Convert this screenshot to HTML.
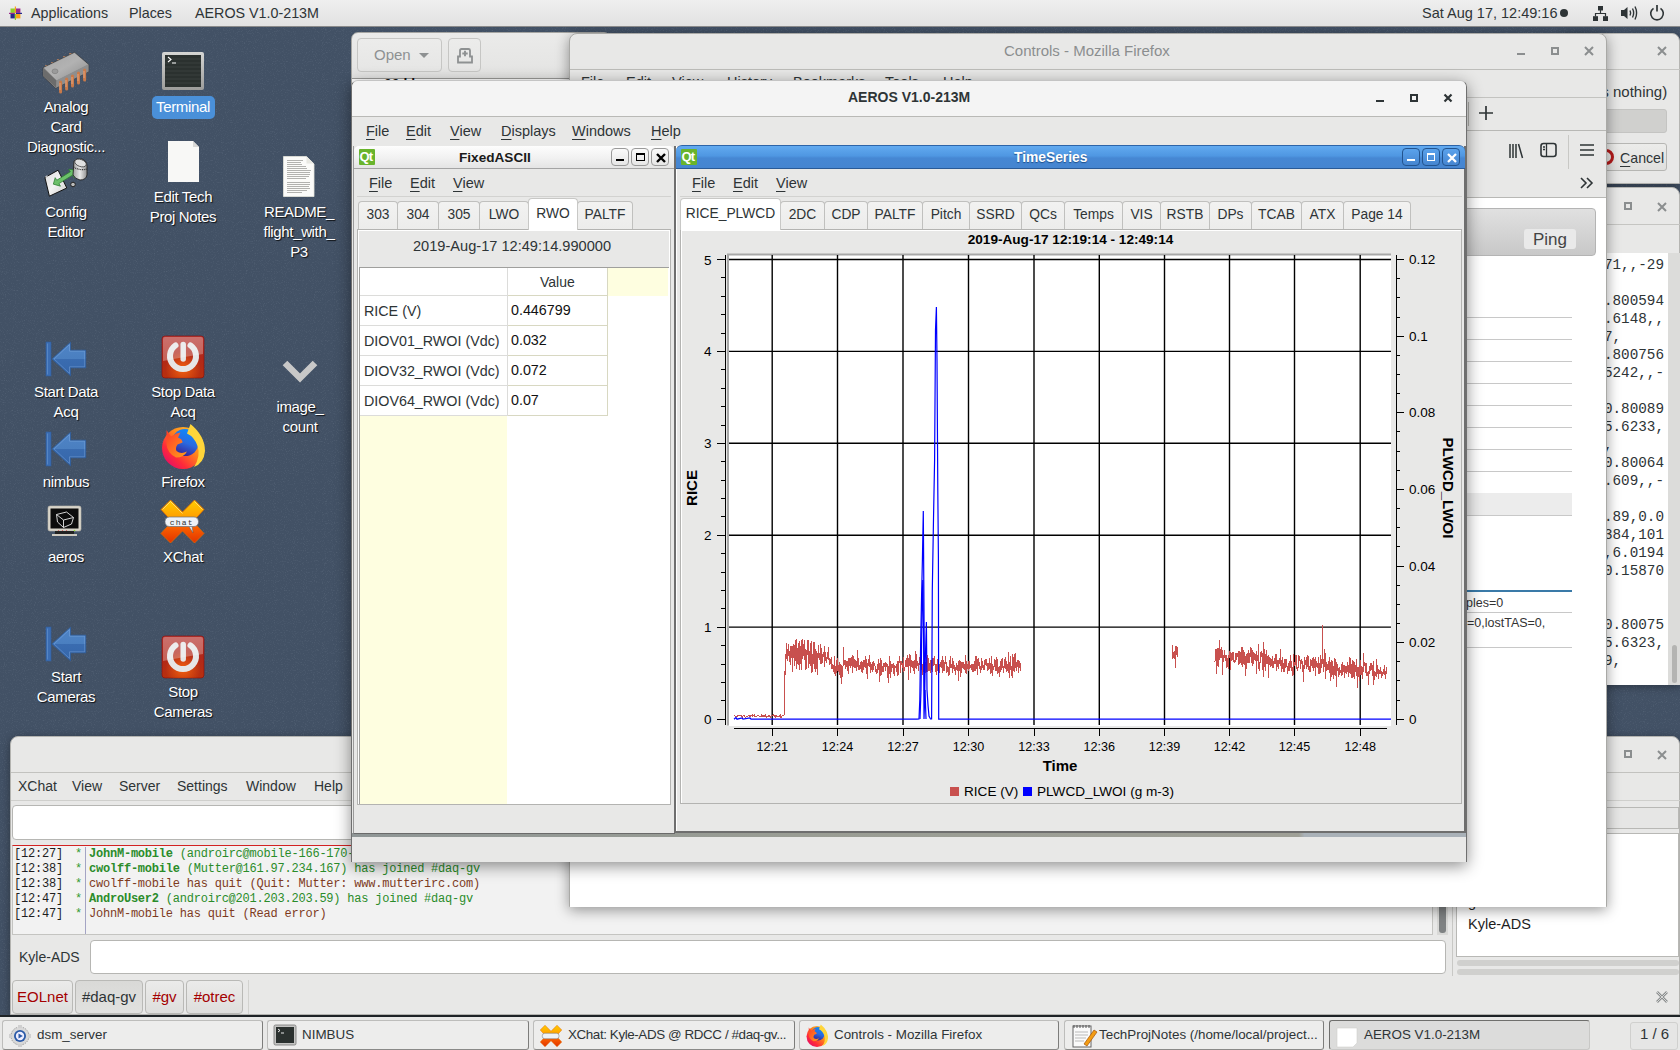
<!DOCTYPE html>
<html><head><meta charset="utf-8">
<style>
*{box-sizing:border-box;margin:0;padding:0}
html,body{width:1680px;height:1050px;overflow:hidden}
body{position:relative;background:#425165;font-family:"Liberation Sans",sans-serif;font-size:14px;color:#2e3436}
.a{position:absolute}
.t{position:absolute;white-space:nowrap;line-height:1}
.mono{font-family:"Liberation Mono",monospace}
.u{text-decoration:underline;text-underline-offset:3px}
/* top bar */
#top{left:0;top:0;width:1680px;height:27px;background:linear-gradient(#efefef,#e2e2e2);border-bottom:1px solid #8a8a8a}
/* desktop icon labels */
.dl{position:absolute;color:#fff;font-size:15px;letter-spacing:-0.35px;text-align:center;line-height:20px;text-shadow:1px 1px 1px rgba(0,0,0,.8);width:110px}
/* taskbar */
#tb{left:0;top:1015px;width:1680px;height:35px;background:#e8e8e7;border-top:2px solid #1e2326}
.tbb{position:absolute;top:3px;height:30px;overflow:hidden;background:#ededec;border:1px solid #bdbdbb;border-right-color:#7d7d7b;border-bottom-color:#8a8a88;border-radius:3px}
.tbb.act{background:#dcdcdb;border-color:#6f6f6d;border-right-color:#c8c8c6;border-bottom-color:#c8c8c6}
.tbb span{position:absolute;top:6px;font-size:13.4px;color:#2e3436;white-space:nowrap}
.win{position:absolute;background:#e8e8e7;border:1px solid #a9a9a7;border-radius:7px 7px 0 0;box-shadow:0 2px 12px rgba(0,0,0,.35)}
.qt{width:16px;height:16px;background:#69b42c;border-radius:1px}
.qt::after{content:"Qt";position:absolute;left:0.5px;top:1px;color:#fff;font-weight:bold;font-size:13px;line-height:14px;letter-spacing:-0.8px}
.qb{position:absolute;width:18px;height:18px;border:1px solid #9a9a9a;border-radius:4px;background:linear-gradient(#fafafa,#e6e6e6)}
.qb.bl{border-color:#23548f;background:linear-gradient(#5aa2ec,#4585d0)}
.tab{position:absolute;top:201px;height:29px;padding-bottom:4px;background:linear-gradient(#f2f2f1,#ececeb);border:1px solid #c0c0be;border-bottom:0;border-radius:4px 4px 0 0;font-size:13.8px;color:#2e3436;text-align:center;line-height:25px;white-space:nowrap}
.tab.sel{top:198px;height:32px;background:#fff;line-height:29px;border-color:#c8c8c6}
.xt{position:absolute;top:980px;height:34px;border:1px solid #b9b9b6;border-radius:4px;background:linear-gradient(#ebebea,#dededc);font-size:15px;color:#2e3436;text-align:center;line-height:32px;white-space:nowrap}
</style></head><body>

<svg class="a" style="left:0;top:27px" width="1680" height="990"><filter id="nz" x="0" y="0" width="100%" height="100%"><feTurbulence type="fractalNoise" baseFrequency="0.9" numOctaves="2" seed="3"/><feColorMatrix type="matrix" values="0 0 0 0 0.55  0 0 0 0 0.62  0 0 0 0 0.72  0 0 0 1.6 -0.85"/></filter><rect width="1680" height="990" filter="url(#nz)" opacity="0.2"/></svg>
<!-- ===== DESKTOP ICONS ===== -->
<div id="icons">
<svg class="a" style="left:0;top:0" width="340" height="730">
<defs>
<linearGradient id="gdoc" x1="0" y1="0" x2="1" y2="1"><stop offset="0" stop-color="#d8d8d8"/><stop offset="0.5" stop-color="#f4f4f4"/><stop offset="1" stop-color="#c8c8c8"/></linearGradient>
<linearGradient id="gpis" x1="0" y1="0" x2="1" y2="0"><stop offset="0" stop-color="#a0a0a0"/><stop offset="0.5" stop-color="#e8e8e8"/><stop offset="1" stop-color="#909090"/></linearGradient>
<linearGradient id="gchip2" x1="0" y1="0" x2="1" y2="1"><stop offset="0" stop-color="#a6a6a6"/><stop offset="0.5" stop-color="#b2b2b2"/><stop offset="1" stop-color="#8c8c8c"/></linearGradient>
<radialGradient id="gglow" cx="0.5" cy="0.78" r="0.42"><stop offset="0" stop-color="#ff6a10" stop-opacity="0.85"/><stop offset="1" stop-color="#ff6a10" stop-opacity="0"/></radialGradient>
<linearGradient id="gred" x1="0" y1="0" x2="0" y2="1"><stop offset="0" stop-color="#b83a36"/><stop offset="0.5" stop-color="#b0281a"/><stop offset="1" stop-color="#b8300e"/></linearGradient>
<linearGradient id="gblue" x1="0" y1="0" x2="0" y2="1"><stop offset="0" stop-color="#4f84c6"/><stop offset="0.5" stop-color="#4a7fc0"/><stop offset="0.5" stop-color="#3a6cb0"/><stop offset="1" stop-color="#3566aa"/></linearGradient>
<linearGradient id="gxt" x1="0" y1="0" x2="0" y2="1"><stop offset="0" stop-color="#ffcc00"/><stop offset="0.45" stop-color="#ff9a00"/><stop offset="0.55" stop-color="#ff6a00"/><stop offset="1" stop-color="#e23200"/></linearGradient>
<radialGradient id="gff" cx="0.45" cy="0.6" r="0.6"><stop offset="0" stop-color="#ffbd2e"/><stop offset="0.6" stop-color="#ff6a1e"/><stop offset="1" stop-color="#e8244a"/></radialGradient>
<linearGradient id="gffo" x1="0" y1="1" x2="1" y2="0"><stop offset="0" stop-color="#d4007f"/><stop offset="0.3" stop-color="#ff2a3a"/><stop offset="0.6" stop-color="#ff8a1a"/><stop offset="1" stop-color="#ffd83a"/></linearGradient>
<linearGradient id="gffb" x1="0.7" y1="0" x2="0.3" y2="1"><stop offset="0" stop-color="#0a8cff"/><stop offset="0.5" stop-color="#2a6ae0"/><stop offset="1" stop-color="#3a1a8a"/></linearGradient>
<linearGradient id="gffh" x1="0" y1="0" x2="1" y2="1"><stop offset="0" stop-color="#ff3a2a"/><stop offset="1" stop-color="#ffa01a"/></linearGradient>
<linearGradient id="gterm" x1="0" y1="0" x2="0" y2="1"><stop offset="0" stop-color="#d6d6d4"/><stop offset="1" stop-color="#9c9c9a"/></linearGradient>
</defs>
<!-- chip -->
<g>
<g fill="#c88a62"><ellipse cx="46.5" cy="66" rx="1.6" ry="1"/><ellipse cx="52.5" cy="63" rx="1.6" ry="1"/><ellipse cx="58.5" cy="60" rx="1.6" ry="1"/><ellipse cx="64.5" cy="57" rx="1.6" ry="1"/><ellipse cx="70.5" cy="54" rx="1.6" ry="1"/></g>
<path d="M43 67.6L74.5 52.3L88.7 64.4V71.7L55.4 88.2L43 76.3Z" fill="#8a8a8a" stroke="#333" stroke-width="0.6"/>
<path d="M44 67.8L74.5 53L88 64.6L56.5 80.5Z" fill="url(#gchip2)"/>
<path d="M43.2 68L56.5 80.5V88L43.2 76Z" fill="#6c6c6c"/>
<path d="M56.5 80.5L88.5 64.6V71.5L56 87.8Z" fill="#8e8e8e"/>
<ellipse cx="55" cy="71.3" rx="3" ry="2.4" fill="#9a9a9a" stroke="#7a7a7a" stroke-width="0.6"/>
<g stroke="#c97a4a" stroke-width="3" stroke-linecap="round"><path d="M60.6 82V92M66.6 79V89M72.5 76V86M78.5 73V83M84.6 70V80"/></g>
<g stroke="#e8b090" stroke-width="0.8"><path d="M60 83V90M66 80V87M72 77V84M78 74V81M84 71V78"/></g>
</g>
<!-- terminal -->
<rect x="162" y="52" width="42" height="38" rx="2" fill="url(#gterm)"/>
<rect x="165" y="55" width="36" height="32" fill="#2b312f"/>
<g stroke="#3a413e" stroke-width="1"><path d="M165 59H201M165 63H201M165 67H201M165 71H201M165 75H201M165 79H201M165 83H201"/></g>
<path d="M168 57L171 59.5L168 62M172 63H176" stroke="#fff" stroke-width="1.1" fill="none"/>
<rect x="152" y="96" width="63" height="23" rx="5" fill="#4a90d9"/>
<!-- config editor -->
<path d="M44.9 177.5L58.1 170.2L66.8 188L49.4 196.2Z" fill="url(#gdoc)" stroke="#111" stroke-width="1"/>
<path d="M44.9 177.5Q46 174.5 48.5 176Z" fill="#ddd"/>
<g transform="rotate(-32 66 178)">
<path d="M52 176.5L57 172V175H73V172L79 177L73 182V179H57V182Z" fill="#6cc06a" stroke="#2e7d32" stroke-width="0.7"/>
</g>
<path d="M74 161Q76 158 82 159Q87 161 87 166V175Q86 180 80 180Q75 179 73 175Z" fill="url(#gpis)" stroke="#222" stroke-width="0.9"/>
<ellipse cx="80.5" cy="163" rx="6" ry="3.5" transform="rotate(20 80.5 163)" fill="#e0e0e0" stroke="#333" stroke-width="0.7"/>
<path d="M73.5 167Q80 171 87 169" fill="none" stroke="#333" stroke-width="1.2" stroke-dasharray="1 0.8"/>
<circle cx="73" cy="184.5" r="2.3" fill="#bbb" stroke="#222" stroke-width="1"/>
<!-- edit tech doc -->
<path d="M168 141H193L199 147V182H168Z" fill="#f8f8f6"/>
<path d="M193 141V147H199" fill="#d8d8d6"/>
<!-- readme -->
<path d="M283.5 156.5H306.5L314 164V196.5H283.5Z" fill="#fbfbf9" stroke="#e4e4dc" stroke-width="0.8"/>
<path d="M306.5 156.5V163.5H314Z" fill="#e8e8e2"/>
<g stroke="#a9a9a6" stroke-width="0.9"><path d="M287 160.5H303M287 162.5H301M287 164.5H302M287 166.5H306M287 168.5H307M287 170.5H311M287 172.5H310M287 174.5H310M287 176.5H309M287 178.5H306M287 182.5H310M287 184.5H310M287 186.5H309M287 188.5H310M287 190.5H307M287 192.5H302"/></g>
<!-- start data acq arrow -->
<g id="arr">
<rect x="46" y="342" width="5" height="34" fill="#3b6db3" stroke="#2f5e9e" stroke-width="0.6"/>
<path d="M52 359L70.5 342.2V350.2H85.7V367.8H70.5V375.8Z" fill="url(#gblue)" stroke="#2f5e9e" stroke-width="0.8"/>
<path d="M54 359L69.5 344.6V351.2H84.7V366.8H69.5V373.4Z" fill="none" stroke="#8ab4e8" stroke-width="0.7" opacity="0.55"/><path d="M47.5 343.5V374.5" stroke="#8ab4e8" stroke-width="0.7" opacity="0.5"/>
</g>
<use href="#arr" y="90"/>
<use href="#arr" y="285"/>
<!-- stop power -->
<g id="pwr">
<rect x="162" y="336" width="42" height="42" rx="3" fill="url(#gred)" stroke="#8a0a06" stroke-width="0.6"/>
<rect x="162" y="336" width="42" height="42" rx="3" fill="url(#gglow)"/>
<path d="M175.5 345.4A13 13 0 1 0 190.5 345.4" fill="none" stroke="#e6e6e6" stroke-width="6" stroke-linecap="round"/>
<path d="M183.2 344.5V359" stroke="#e6e6e6" stroke-width="5.5" stroke-linecap="round"/>
<path d="M163 339Q163 337 165 337H201Q203 337 203 339V354Q183 357 163 361Z" fill="#fff" opacity="0.28"/>
</g>
<use href="#pwr" y="300"/>
<!-- chevron -->
<path d="M285 363L300 378L315 363" fill="none" stroke="#c8c8c8" stroke-width="6.5"/>
<!-- firefox -->
<circle cx="183" cy="448" r="21" fill="url(#gffo)"/>
<circle cx="185" cy="442.6" r="13.5" fill="url(#gffb)"/>
<path d="M166.5 430L171 436.5Q176 433 180.5 432.5L178 437.5Q182.5 439 182.5 442.5L177.5 444.5Q175 448 176.5 451Q181 454.5 187 451.5Q184 457.5 176 457.5Q167 453 166.5 444Z" fill="url(#gffh)"/>
<path d="M190.5 424Q205 436 205 451Q204 463 194 467Q201 456 197.5 446Q194.5 437 187 433.5Z" fill="#ffd53a"/>
<!-- aeros monitor -->
<rect x="48" y="506" width="33" height="25" rx="2" fill="#d8d4ca" stroke="#bdb8ab" stroke-width="0.6"/>
<rect x="50.5" y="508.5" width="28" height="20" fill="#0c0c0c"/>
<path d="M56.5 514.5L66.5 512L73.5 517.5L63.5 520ZM56.5 514.5L57.5 522L63.5 527.5L71.5 524L73.5 517.5M63.5 520L63.5 527.5" fill="none" stroke="#e8e8e8" stroke-width="0.9" stroke-linejoin="round"/>
<rect x="55" y="531" width="19" height="3" fill="#222"/>
<rect x="52" y="534" width="25" height="2" fill="#cfcac0"/>
<g fill="#d06060"><circle cx="58.5" cy="530.5" r="0.6"/><circle cx="62.5" cy="530.5" r="0.6"/><circle cx="66.5" cy="530.5" r="0.6"/></g><circle cx="74.5" cy="530.5" r="0.8" fill="#9be02a"/>
<!-- xchat -->
<path d="M170.5 500L182.5 512L194.5 500L204 509.5L193 521.5L204 533.5L194.5 543L182.5 531L170.5 543L161 533.5L172 521.5L161 509.5Z" fill="url(#gxt)" stroke="#e06a00" stroke-width="0.8" stroke-linejoin="round"/>
<path d="M162.5 509.5L170.5 501.5L182.5 513.5M194.5 501.5L202.5 509.5" fill="none" stroke="#fff3b0" stroke-width="0.8" opacity="0.8"/>
<path d="M188 525L193 533L192 525Z" fill="#dfe6ee" stroke="#555" stroke-width="0.5"/>
<rect x="165" y="517" width="33.5" height="9.5" rx="4.5" fill="#eef2f7" stroke="#6a7078" stroke-width="0.7"/>
<text x="181.8" y="524.6" font-size="8" font-family="Liberation Mono" text-anchor="middle" fill="#333" letter-spacing="1.2">chat</text>
</svg>
<div class="dl" style="left:11px;top:97px">Analog<br>Card<br>Diagnostic...</div>
<div class="dl" style="left:128px;top:97px;text-shadow:none">Terminal</div>
<div class="dl" style="left:11px;top:202px">Config<br>Editor</div>
<div class="dl" style="left:128px;top:187px">Edit Tech<br>Proj Notes</div>
<div class="dl" style="left:244px;top:202px">README_<br>flight_with_<br>P3</div>
<div class="dl" style="left:11px;top:382px">Start Data<br>Acq</div>
<div class="dl" style="left:128px;top:382px">Stop Data<br>Acq</div>
<div class="dl" style="left:245px;top:397px">image_<br>count</div>
<div class="dl" style="left:11px;top:472px">nimbus</div>
<div class="dl" style="left:128px;top:472px">Firefox</div>
<div class="dl" style="left:11px;top:547px">aeros</div>
<div class="dl" style="left:128px;top:547px">XChat</div>
<div class="dl" style="left:11px;top:667px">Start<br>Cameras</div>
<div class="dl" style="left:128px;top:682px">Stop<br>Cameras</div>
</div>

<!-- ===== RIGHT BACKGROUND WINDOWS ===== -->
<div id="rwins">
<!-- top-right dialog -->
<div class="a" style="left:1560px;top:33px;width:120px;height:151px;background:#e8e8e7;border:1px solid #b5b5b2;border-radius:8px 8px 0 0;box-shadow:0 2px 8px rgba(0,0,0,.3)"></div>
<div class="a" style="left:1560px;top:69px;width:125px;height:1px;background:#c5c5c2"></div>
<svg class="a" style="left:1657px;top:46px" width="10" height="10"><path d="M1 1L9 9M9 1L1 9" stroke="#8b8e8f" stroke-width="2"/></svg>
<div class="t" style="left:1598px;top:84px;font-size:15px;color:#2e3436">is nothing)</div>
<div class="a" style="left:1590px;top:109px;width:77px;height:24px;background:#d0d0ce;border:1px solid #c4c4c2;border-radius:3px"></div>
<div class="a" style="left:1590px;top:143px;width:77px;height:28px;background:linear-gradient(#ececea,#e0e0de);border:1px solid #b6b6b3;border-radius:3px"></div>
<div class="a" style="left:1598px;top:149px;width:16px;height:16px;border-radius:50%;border:3px solid #b41a1a"></div>
<div class="t" style="left:1620px;top:151px;font-size:14.2px;color:#2e3436"><span class="u">C</span>ancel</div>
<!-- terminal window -->
<div class="a" style="left:1560px;top:187px;width:120px;height:498px;background:#e8e8e7;border:1px solid #b5b5b2;border-radius:8px 8px 0 0;box-shadow:0 2px 8px rgba(0,0,0,.3)"></div>
<div class="a" style="left:1560px;top:224px;width:125px;height:1px;background:#c5c5c2"></div>
<div class="a" style="left:1624px;top:202px;width:8px;height:8px;border:2px solid #8b8e8f"></div>
<svg class="a" style="left:1657px;top:202px" width="10" height="10"><path d="M1 1L9 9M9 1L1 9" stroke="#8b8e8f" stroke-width="2"/></svg>
<div class="a" style="left:1560px;top:253px;width:108px;height:432px;background:#fff"></div>
<div class="a" style="left:1668px;top:253px;width:12px;height:432px;background:#dcdcda"></div>
<div class="a" style="left:1672px;top:645px;width:5px;height:38px;background:#b4b4b2;border-radius:3px"></div>
<div class="mono a" style="left:1556px;top:256px;width:108px;font-size:14.3px;line-height:18px;color:#2e3436;white-space:pre;text-align:right">71,,-29

.800594
.6148,,
7,     
.800756
5242,,-

0.80089
5.6233,
,      
0.80064
.609,,-

.89,0.0
384,101
,6.0194
0.15870


0.80075
5.6323,
9,     </div>
</div>

<!-- ===== GEDIT ===== -->
<div id="gedit">
<div class="a" style="left:351px;top:32px;width:260px;height:60px;background:linear-gradient(#ebebea,#e3e3e2 80%,#d4d4d2);border:1px solid #a6a6a3;border-radius:7px 7px 0 0"></div>
<div class="a" style="left:352px;top:78px;width:258px;height:1px;background:#9a9a98"></div><div class="a" style="left:352px;top:79px;width:258px;height:14px;background:#fff"></div><div class="t" style="left:384px;top:77px;font-size:14px;font-weight:bold;color:#111">00 l l</div>
<div class="a" style="left:357px;top:38px;width:85px;height:34px;border:1px solid #c6c6c4;border-radius:4px;background:linear-gradient(#ececeb,#e6e6e5)"></div>
<div class="t" style="left:374px;top:47px;font-size:15px;color:#8e9192">Open</div>
<svg class="a" style="left:419px;top:53px" width="10" height="6"><path d="M0 0H10L5 5Z" fill="#8e9192"/></svg>
<div class="a" style="left:448px;top:38px;width:33px;height:34px;border:1px solid #c6c6c4;border-radius:4px;background:linear-gradient(#ececeb,#e6e6e5)"></div>
<svg class="a" style="left:455px;top:47px" width="20" height="18"><path d="M3 15.5V9.5H5V3.5Q5 2 6.5 2H13.5Q15 2 15 3.5V9.5H17V15.5Z" fill="none" stroke="#8e9192" stroke-width="1.8"/><path d="M10 3.8V9.2M7.3 6.5H12.7" stroke="#8e9192" stroke-width="1.9"/></svg>
</div>

<!-- ===== XCHAT ===== -->
<div id="xchat">
<div class="a" style="left:10px;top:736px;width:1670px;height:279px;background:#e8e8e7;border:1px solid #b3b3b0;border-radius:8px 8px 0 0;box-shadow:0 2px 10px rgba(0,0,0,.35)"></div>
<div class="a" style="left:11px;top:772px;width:1669px;height:1px;background:#c2c2bf"></div>
<div class="a" style="left:1624px;top:750px;width:8px;height:8px;border:2px solid #8b8e8f"></div>
<svg class="a" style="left:1657px;top:750px" width="10" height="10"><path d="M1 1L9 9M9 1L1 9" stroke="#8b8e8f" stroke-width="2"/></svg>
<div class="t" style="left:18px;top:779px;font-size:14px">XChat</div>
<div class="t" style="left:72px;top:779px;font-size:14px">View</div>
<div class="t" style="left:119px;top:779px;font-size:14px">Server</div>
<div class="t" style="left:177px;top:779px;font-size:14px">Settings</div>
<div class="t" style="left:246px;top:779px;font-size:14px">Window</div>
<div class="t" style="left:314px;top:779px;font-size:14px">Help</div>
<div class="a" style="left:11px;top:800px;width:1669px;height:1px;background:#cfcfcc"></div>
<!-- topic -->
<div class="a" style="left:12px;top:805px;width:1440px;height:35px;background:#fff;border:1px solid #b6b6b3;border-radius:4px"></div>
<!-- userlist header -->
<div class="a" style="left:1456px;top:807px;width:223px;height:22px;background:#e6e6e5;border:1px solid #b8b8b5"></div>
<!-- chat text area -->
<div class="a" style="left:12px;top:845px;width:1421px;height:90px;background:#f2f2f2;border:1px solid #c4c4c1;border-top:1px solid #d22222"></div>
<div class="a" style="left:85px;top:847px;width:1px;height:87px;background:#a4a4c4"></div>
<div class="a" style="left:1437px;top:845px;width:11px;height:90px;background:#d8d8d6"></div>
<div class="a" style="left:1439px;top:900px;width:7px;height:33px;background:#7f8283;border-radius:3px"></div>
<div class="mono a" style="left:14px;top:847px;font-size:12px;letter-spacing:-0.22px;line-height:15px;white-space:pre;color:#1e1e1e">[12:27]
[12:38]
[12:38]
[12:47]
[12:47]</div>
<div class="mono a" style="left:75px;top:847px;font-size:12px;letter-spacing:-0.22px;line-height:15px;white-space:pre;color:#2f9a2f">*
*
*
*
*</div>
<div class="mono a" style="left:89px;top:847px;font-size:12px;letter-spacing:-0.22px;line-height:15px;white-space:pre;color:#2a8c2a"><b>JohnM-mobile</b> (androirc@mobile-166-170-41-22.mycingular.net) has joined #daq-gv
<b>cwolff-mobile</b> (Mutter@161.97.234.167) has joined #daq-gv
<span style="color:#7e3b1e">cwolff-mobile has quit (Quit: Mutter: www.mutterirc.com)</span>
<b>AndroUser2</b> (androirc@201.203.203.59) has joined #daq-gv
<span style="color:#7e3b1e">JohnM-mobile has quit (Read error)</span></div>
<!-- userlist -->
<div class="a" style="left:1452px;top:806px;width:1px;height:170px;background:#c8c8c5"></div>
<div class="a" style="left:1456px;top:833px;width:223px;height:124px;background:#fff;border:1px solid #b8b8b5"></div>
<div class="t" style="left:1468px;top:895px;font-size:14.5px;color:#1e1e1e">grant</div><div class="t" style="left:1468px;top:917px;font-size:14.5px;color:#1e1e1e">Kyle-ADS</div>
<div class="a" style="left:1457px;top:960px;width:222px;height:6px;background:#d0d0ce;border-radius:3px"></div>
<div class="a" style="left:1457px;top:969px;width:222px;height:6px;background:#d0d0ce;border-radius:3px"></div>
<!-- input -->
<div class="t" style="left:19px;top:950px;font-size:14px">Kyle-ADS</div>
<div class="a" style="left:90px;top:940px;width:1356px;height:34px;background:#fff;border:1px solid #b6b6b3;border-radius:4px"></div>
<!-- tabs -->
<div class="xt" style="left:12px;width:61px;color:#a40000">EOLnet</div>
<div class="xt" style="left:75px;width:68px;background:linear-gradient(#d9d9d7,#e1e1df)">#daq-gv</div>
<div class="xt" style="left:145px;width:39px;color:#a40000">#gv</div>
<div class="xt" style="left:186px;width:57px;color:#a40000">#otrec</div>
<div class="a" style="left:248px;top:980px;width:1px;height:34px;background:#d2d2cf"></div>
<svg class="a" style="left:1655px;top:990px" width="14" height="14"><path d="M2 2L12 12M12 2L2 12" stroke="#8b8e8f" stroke-width="2.6"/><path d="M2 2L12 12M12 2L2 12" stroke="#e8e8e7" stroke-width="0.8"/></svg>
</div>

<!-- ===== FIREFOX ===== -->
<div id="ff">
<div class="a" style="left:569px;top:33px;width:1038px;height:874px;background:#e8e8e7;border:1px solid #a9a9a6;border-radius:8px 8px 0 0;box-shadow:0 3px 14px rgba(0,0,0,.4)"></div>
<div class="t" style="left:1004px;top:43px;font-size:15px;color:#8b8e8f">Controls - Mozilla Firefox</div>
<div class="a" style="left:1517px;top:53px;width:8px;height:2px;background:#8b8e8f"></div>
<div class="a" style="left:1551px;top:47px;width:8px;height:8px;border:2px solid #8b8e8f"></div>
<svg class="a" style="left:1584px;top:46px" width="10" height="10"><path d="M1 1L9 9M9 1L1 9" stroke="#8b8e8f" stroke-width="2"/></svg>
<div class="a" style="left:570px;top:69px;width:1036px;height:1px;background:#bdbdba"></div>
<div class="t" style="left:581px;top:75px;font-size:14.5px">File</div><div class="t" style="left:626px;top:75px;font-size:14.5px">Edit</div><div class="t" style="left:672px;top:75px;font-size:14.5px">View</div><div class="t" style="left:727px;top:75px;font-size:14.5px">History</div><div class="t" style="left:793px;top:75px;font-size:14.5px">Bookmarks</div><div class="t" style="left:885px;top:75px;font-size:14.5px">Tools</div><div class="t" style="left:943px;top:75px;font-size:14.5px">Help</div>
<div class="a" style="left:570px;top:97px;width:1036px;height:1px;background:#c3c3c0"></div>
<div class="a" style="left:1468px;top:102px;width:1px;height:24px;background:#b0b0ad"></div>
<svg class="a" style="left:1478px;top:105px" width="16" height="16"><path d="M8 1V15M1 8H15" stroke="#2e3436" stroke-width="1.7"/></svg>
<div class="a" style="left:570px;top:130px;width:1036px;height:1px;background:#b8b8b5"></div>
<!-- toolbar icons -->
<svg class="a" style="left:1508px;top:142px" width="20" height="18"><path d="M2 2V16M5 2V16M8 2V16M10.5 2L14.5 16" stroke="#2e3436" stroke-width="1.5" fill="none"/></svg>
<svg class="a" style="left:1540px;top:142px" width="18" height="17"><rect x="1" y="1.5" width="15" height="13" rx="2.5" fill="none" stroke="#2e3436" stroke-width="1.6"/><path d="M6.5 2V14M3 5H5M3 7.5H5" stroke="#2e3436" stroke-width="1.3"/></svg>
<div class="a" style="left:1568px;top:135px;width:1px;height:34px;background:#c8c8c5"></div>
<svg class="a" style="left:1579px;top:143px" width="16" height="14"><path d="M1 2H15M1 7H15M1 12H15" stroke="#2e3436" stroke-width="1.7"/></svg>
<svg class="a" style="left:1580px;top:177px" width="14" height="12"><path d="M1 1L6 6L1 11M7 1L12 6L7 11" stroke="#2e3436" stroke-width="1.6" fill="none"/></svg>
<div class="a" style="left:570px;top:197px;width:1036px;height:1px;background:#b8b8b5"></div>
<div class="a" style="left:570px;top:198px;width:1036px;height:709px;background:#fff"></div>
<!-- page content -->
<div class="a" style="left:1440px;top:208px;width:156px;height:48px;background:linear-gradient(#e0e0e0,#d2d2d2 60%,#c8c8c8);border:1px solid #b4b4b4;border-radius:4px"></div>
<div class="a" style="left:1524px;top:229px;width:52px;height:20px;background:#e9e9e9;border-radius:3px"></div>
<div class="t" style="left:1533px;top:231px;font-size:17px;color:#444">Ping</div>
<div class="a" style="left:1440px;top:317px;width:132px;height:1px;background:#c8c8c8"></div><div class="a" style="left:1440px;top:339px;width:132px;height:1px;background:#c8c8c8"></div><div class="a" style="left:1440px;top:361px;width:132px;height:1px;background:#c8c8c8"></div><div class="a" style="left:1440px;top:383px;width:132px;height:1px;background:#c8c8c8"></div><div class="a" style="left:1440px;top:405px;width:132px;height:1px;background:#c8c8c8"></div><div class="a" style="left:1440px;top:427px;width:132px;height:1px;background:#c8c8c8"></div><div class="a" style="left:1440px;top:449px;width:132px;height:1px;background:#c8c8c8"></div><div class="a" style="left:1440px;top:471px;width:132px;height:1px;background:#c8c8c8"></div><div class="a" style="left:1440px;top:493px;width:132px;height:1px;background:#c8c8c8"></div><div class="a" style="left:1440px;top:515px;width:132px;height:1px;background:#c8c8c8"></div><div class="a" style="left:1440px;top:612px;width:132px;height:1px;background:#c8c8c8"></div><div class="a" style="left:1440px;top:647px;width:132px;height:1px;background:#c8c8c8"></div>
<div class="a" style="left:1440px;top:493px;width:132px;height:22px;background:#ececec"></div>
<div class="a" style="left:1440px;top:590px;width:132px;height:2px;background:#3a7aa8"></div>
<div class="t" style="left:1466px;top:597px;font-size:12.5px;color:#333">ples=0</div>
<div class="t" style="left:1467px;top:617px;font-size:12.5px;color:#333">=0,lostTAS=0,</div>
</div>

<!-- ===== AEROS ===== -->
<div id="aeros">
<!-- main frame -->
<div class="a" style="left:351px;top:80px;width:1116px;height:782px;background:#e8e8e7;border:1px solid #6f6f6f;border-top-color:#c4c4c4;border-radius:7px 7px 0 0;box-shadow:0 4px 16px rgba(0,0,0,.45)"></div>
<div class="a" style="left:352px;top:81px;width:1114px;height:36px;background:#f4f4f4;border-radius:6px 6px 0 0;border-bottom:1px solid #b9b9b6"></div>
<div class="t" style="left:848px;top:90px;font-weight:bold;font-size:14px;color:#2e3436">AEROS V1.0-213M</div>
<div class="a" style="left:1376px;top:100px;width:8px;height:2px;background:#2e3436"></div>
<div class="a" style="left:1410px;top:94px;width:8px;height:8px;border:2px solid #2e3436"></div>
<svg class="a" style="left:1443px;top:93px" width="10" height="10"><path d="M1.5 1.5L8.5 8.5M8.5 1.5L1.5 8.5" stroke="#2e3436" stroke-width="2.2"/></svg>
<!-- menubar -->
<div class="t" style="left:366px;top:124px;font-size:14.5px"><span class="u">F</span>ile</div>
<div class="t" style="left:406px;top:124px;font-size:14.5px"><span class="u">E</span>dit</div>
<div class="t" style="left:450px;top:124px;font-size:14.5px"><span class="u">V</span>iew</div>
<div class="t" style="left:501px;top:124px;font-size:14.5px"><span class="u">D</span>isplays</div>
<div class="t" style="left:572px;top:124px;font-size:14.5px"><span class="u">W</span>indows</div>
<div class="t" style="left:651px;top:124px;font-size:14.5px"><span class="u">H</span>elp</div>
<!-- MDI strip + status -->
<div class="a" style="left:352px;top:833px;width:1114px;height:4px;background:linear-gradient(90deg,#8f9696 0,#9a9d94 40%,#9fa097 85%,#a9b1b8 85.5%,#a9b1b8 100%)"></div>
<div class="a" style="left:352px;top:837px;width:1114px;height:25px;background:#e8e8e7"></div>

<!-- ===== FixedASCII subwindow ===== -->
<div class="a" style="left:353px;top:146px;width:322px;height:688px;background:#e8e8e7;border:1px solid #6a6a6a;border-left-color:#9a9a9a;border-top:0"></div>
<div class="a" style="left:354px;top:146px;width:320px;height:23px;background:linear-gradient(#fdfdfd,#f1f1f1 55%,#e4e4e4);border-bottom:1px solid #a4a4a4;border-radius:5px 5px 0 0"></div>
<div class="a qt" style="left:359px;top:149px"></div>
<div class="t" style="left:459px;top:151px;font-weight:bold;font-size:13.6px;color:#1a1a1a">FixedASCII</div>
<div class="qb" style="left:611px;top:148px"><div class="a" style="left:4px;top:10px;width:8px;height:2px;background:#000"></div></div>
<div class="qb" style="left:631px;top:148px"><div class="a" style="left:4px;top:4px;width:9px;height:8px;border:1.5px solid #000;border-top-width:2.5px"></div></div>
<div class="qb" style="left:651px;top:148px"><svg class="a" style="left:3px;top:3px" width="12" height="12"><path d="M2 2L10 10M10 2L2 10" stroke="#000" stroke-width="2.4"/></svg></div>
<div class="t" style="left:369px;top:176px;font-size:14.5px"><span class="u">F</span>ile</div>
<div class="t" style="left:410px;top:176px;font-size:14.5px"><span class="u">E</span>dit</div>
<div class="t" style="left:453px;top:176px;font-size:14.5px"><span class="u">V</span>iew</div>
<div class="a" style="left:357px;top:196px;width:314px;height:1px;background:#d2d2d0"></div>
<!-- tabs -->
<div class="tab" style="left:358px;width:40px">303</div>
<div class="tab" style="left:397px;width:42px">304</div>
<div class="tab" style="left:438px;width:42px">305</div>
<div class="tab" style="left:479px;width:50px">LWO</div>
<div class="tab" style="left:577px;width:56px">PALTF</div>
<div class="a" style="left:357px;top:229px;width:314px;height:576px;background:#fff;border:1px solid #b3b3b1"></div>
<div class="tab sel" style="left:528px;width:50px">RWO</div>
<!-- date header -->
<div class="a" style="left:359px;top:231px;width:310px;height:36px;background:#e8e8e7"></div>
<div class="t" style="left:413px;top:239px;font-size:14.6px">2019-Aug-17 12:49:14.990000</div>
<!-- table -->
<div class="a" style="left:359px;top:267px;width:310px;height:537px;background:#fff;border-top:1px solid #9f9f9d;border-left:1px solid #9f9f9d"></div>
<div class="a" style="left:607px;top:268px;width:61px;height:28px;background:#fefee0"></div>
<div class="a" style="left:360px;top:416px;width:147px;height:388px;background:#fefee0"></div>
<div class="a" style="left:507px;top:268px;width:1px;height:148px;background:#dcdcda"></div>
<div class="a" style="left:607px;top:268px;width:1px;height:148px;background:#d8d8c2"></div>
<div class="a" style="left:360px;top:295px;width:248px;height:1px;background:#dcdcda"></div>
<div class="a" style="left:360px;top:325px;width:248px;height:1px;background:#dcdcda"></div>
<div class="a" style="left:360px;top:355px;width:248px;height:1px;background:#dcdcda"></div>
<div class="a" style="left:360px;top:385px;width:248px;height:1px;background:#dcdcda"></div>
<div class="a" style="left:360px;top:415px;width:248px;height:1px;background:#dcdcda"></div>
<div class="a" style="left:508px;top:295px;width:100px;height:1px;background:#d8d8c2"></div>
<div class="a" style="left:508px;top:325px;width:100px;height:1px;background:#d8d8c2"></div>
<div class="a" style="left:508px;top:355px;width:100px;height:1px;background:#d8d8c2"></div>
<div class="a" style="left:508px;top:385px;width:100px;height:1px;background:#d8d8c2"></div>
<div class="a" style="left:508px;top:415px;width:100px;height:1px;background:#d8d8c2"></div>
<div class="t" style="left:540px;top:275px;font-size:14px">Value</div>
<div class="t" style="left:364px;top:304px;font-size:14.3px">RICE (V)</div>
<div class="t" style="left:364px;top:334px;font-size:14.3px">DIOV01_RWOI (Vdc)</div>
<div class="t" style="left:364px;top:364px;font-size:14.3px">DIOV32_RWOI (Vdc)</div>
<div class="t" style="left:364px;top:394px;font-size:14.3px">DIOV64_RWOI (Vdc)</div>
<div class="t" style="left:511px;top:303px;font-size:14.3px;color:#111">0.446799</div>
<div class="t" style="left:511px;top:333px;font-size:14.3px;color:#111">0.032</div>
<div class="t" style="left:511px;top:363px;font-size:14.3px;color:#111">0.072</div>
<div class="t" style="left:511px;top:393px;font-size:14.3px;color:#111">0.07</div>

<!-- ===== TimeSeries subwindow ===== -->
<div class="a" style="left:674px;top:146px;width:792px;height:687px;background:#e8e8e7;border:2px solid #6e6e6e;border-top:0;box-shadow:inset 1px 0 0 #fff"></div>
<div class="a" style="left:676px;top:145px;width:789px;height:24px;background:linear-gradient(#62aaf0,#4f97e2 45%,#4687d3 55%,#4585d0);border-top:1px solid #2d64a8;border-bottom:1px solid #2a5a96;border-radius:6px 6px 0 0"></div>
<div class="a qt" style="left:681px;top:149px"></div>
<div class="t" style="left:1014px;top:151px;font-weight:bold;font-size:13.8px;color:#fff;text-shadow:0 1px 1px #1e4f8a">TimeSeries</div>
<div class="qb bl" style="left:1402px;top:148px"><div class="a" style="left:4px;top:10px;width:8px;height:2px;background:#fff"></div></div>
<div class="qb bl" style="left:1422px;top:148px"><div class="a" style="left:4px;top:4px;width:8px;height:8px;border:1.5px solid #fff;border-top-width:2px"></div></div>
<div class="qb bl" style="left:1442px;top:148px"><svg class="a" style="left:3px;top:3px" width="12" height="12"><path d="M2 2L10 10M10 2L2 10" stroke="#fff" stroke-width="2.3"/></svg></div>
<div class="t" style="left:692px;top:176px;font-size:14.5px"><span class="u">F</span>ile</div>
<div class="t" style="left:733px;top:176px;font-size:14.5px"><span class="u">E</span>dit</div>
<div class="t" style="left:776px;top:176px;font-size:14.5px"><span class="u">V</span>iew</div>
<div class="a" style="left:680px;top:196px;width:782px;height:1px;background:#d2d2d0"></div>
<div class="tab" style="left:780px;width:45px">2DC</div>
<div class="tab" style="left:824px;width:44px">CDP</div>
<div class="tab" style="left:867px;width:56px">PALTF</div>
<div class="tab" style="left:922px;width:48px">Pitch</div>
<div class="tab" style="left:969px;width:53px">SSRD</div>
<div class="tab" style="left:1021px;width:44px">QCs</div>
<div class="tab" style="left:1064px;width:59px">Temps</div>
<div class="tab" style="left:1122px;width:39px">VIS</div>
<div class="tab" style="left:1160px;width:50px">RSTB</div>
<div class="tab" style="left:1209px;width:43px">DPs</div>
<div class="tab" style="left:1251px;width:51px">TCAB</div>
<div class="tab" style="left:1301px;width:43px">ATX</div>
<div class="tab" style="left:1343px;width:68px">Page 14</div>
<div class="a" style="left:680px;top:229px;width:782px;height:575px;background:#e8e8e7;border:1px solid #b3b3b1;box-shadow:inset 1px 1px 0 #fff"></div>
<div class="tab sel" style="left:680px;width:101px">RICE_PLWCD</div>
<!-- chart -->
<svg class="a" style="left:0;top:0" width="1680" height="1050" font-family="Liberation Sans" >
<rect x="728" y="254" width="663" height="472" fill="#fff"/>
<path d="M728 725.5V254.5H1391" fill="none" stroke="#a8a8a8" stroke-width="2"/>
<g stroke="#000" stroke-width="1.4">
<path d="M729 259.5H1391M729 351.4H1391M729 443.3H1391M729 535.2H1391M729 627.1H1391"/>
<path d="M772.2 255V725M837.5 255V725M903 255V725M968.5 255V725M1034 255V725M1099.3 255V725M1164.5 255V725M1229.5 255V725M1294.5 255V725M1360.2 255V725"/>
</g>
<polyline fill="none" stroke="#c8504e" stroke-width="1" shape-rendering="crispEdges" points="734.0,716.2 734.7,715.6 735.4,716.1 736.1,716.2 736.8,716.7 737.5,716.1 738.2,715.2 738.9,715.7 739.6,715.2 740.3,715.8 741.0,715.7 741.7,715.8 742.4,717.2 743.1,715.4 743.8,715.6 744.5,715.6 745.2,717.2 745.9,717.3 746.6,716.6 747.3,716.3 748.0,715.8 748.7,716.0 749.4,715.6 750.1,716.5 750.8,715.8 751.5,715.7 752.2,716.5 752.9,714.7 753.6,715.6 754.3,715.1 755.0,716.4 755.7,716.5 756.4,716.2 757.1,716.1 757.8,715.5 758.5,715.8 759.2,716.3 759.9,716.7 760.6,716.4 761.3,715.1 762.0,716.6 762.7,715.8 763.4,715.7 764.1,717.1 764.8,715.9 765.5,715.0 766.2,717.5 766.9,716.2 767.6,716.1 768.3,716.6 769.0,715.6 769.7,716.0 770.4,717.1 771.1,715.4 771.8,715.5 772.5,715.3 773.2,714.9 773.9,715.7 774.6,715.9 775.3,716.9 776.0,715.5 776.7,716.4 777.4,716.3 778.1,716.9 778.8,716.7 779.5,716.4 780.2,715.0 780.9,717.5 781.6,717.1 782.3,715.8 783.0,714.9 783.7,715.6 784.3,715.5"/>
<polyline fill="none" stroke="#c8504e" stroke-width="1" shape-rendering="crispEdges" points="784.3,715.5 784.6,677.8 785.0,671.2 785.3,674.7 785.6,653.6 785.9,662.8 786.2,647.6 786.5,659.0 786.8,643.5 787.1,660.5 787.4,655.6 787.7,650.2 788.0,649.2 788.3,643.6 788.6,656.3 788.9,651.3 789.2,652.9 789.5,654.2 789.8,661.7 790.1,647.2 790.4,665.3 790.7,646.0 791.0,649.6 791.3,658.2 791.6,651.0 791.9,645.7 792.2,646.9 792.5,671.9 792.8,662.8 793.1,656.2 793.4,657.4 793.7,646.9 794.0,644.1 794.3,653.2 794.6,665.5 794.9,655.9 795.2,661.2 795.5,660.0 795.8,643.0 796.1,639.3 796.4,668.9 796.7,653.8 797.0,660.7 797.3,654.1 797.6,648.5 797.9,664.3 798.2,662.9 798.5,643.2 798.8,654.2 799.1,669.7 799.4,647.6 799.7,641.2 800.0,652.4 800.3,659.5 800.6,646.1 800.9,663.1 801.2,663.0 801.5,669.6 801.8,639.7 802.1,658.5 802.4,645.2 802.7,638.8 803.0,643.6 803.3,652.7 803.6,652.2 803.9,656.2 804.2,639.8 804.5,659.6 804.8,640.3 805.1,653.2 805.4,650.9 805.7,651.0 806.0,670.0 806.3,655.2 806.6,649.8 806.9,657.1 807.2,651.9 807.5,642.2 807.8,641.1 808.1,640.3 808.4,667.6 808.7,661.6 809.0,662.9 809.3,650.8 809.6,664.1 809.9,651.1 810.2,650.3 810.5,643.0 810.8,649.6 811.1,672.6 811.4,656.6 811.7,641.2 812.0,653.5 812.3,671.9 812.6,664.2 812.9,655.3 813.2,663.8 813.5,657.1 813.8,642.0 814.1,668.5 814.4,641.6 814.7,660.9 815.0,658.6 815.3,649.5 815.6,672.3 815.9,658.5 816.2,667.4 816.5,650.8 816.8,657.4 817.1,674.8 817.4,654.5 817.7,665.0 818.0,652.6 818.3,644.7 818.6,658.0 818.9,656.1 819.2,659.5 819.5,656.9 819.8,653.1 820.1,658.1 820.4,652.6 820.7,644.4 821.0,664.3 821.3,647.7 821.6,663.8 821.9,661.3 822.2,654.5 822.5,654.7 822.8,663.2 823.1,654.3 823.4,656.7 823.7,652.1 824.0,656.9 824.3,646.0 824.6,660.4 824.9,666.8 825.2,651.8 825.5,653.6 825.8,661.3 826.3,656.6 826.6,660.7 826.9,662.7 827.2,653.9 827.5,659.0 827.8,655.7 828.1,650.2 828.4,646.7 828.7,658.8 829.0,660.1 829.3,665.2 829.6,658.0 829.9,662.7 830.2,664.0 830.5,658.8 830.8,663.6 831.1,664.7 831.4,663.6 831.7,657.4 832.0,668.8 832.3,664.3 832.6,668.3 832.9,669.0 833.2,669.9 833.5,671.9 833.8,668.9 834.1,663.1 834.4,656.4 834.7,666.5 835.0,674.0 835.3,674.4 835.6,665.8 835.9,674.0 836.2,670.4 836.5,665.4 836.8,664.3 837.1,658.5 837.4,660.1 837.7,670.3 838.0,670.4 838.3,670.8 838.6,666.2 838.9,666.7 839.2,662.0 839.5,663.6 839.8,666.0 840.1,677.7 840.4,672.1 840.7,664.2 841.0,666.3 841.3,666.6 841.6,665.3 841.9,683.5 842.2,666.7 842.5,668.5 842.8,670.1 843.1,663.9 843.4,661.0 843.7,646.6 844.0,662.5 844.3,660.4 844.6,665.2 844.9,663.2 845.2,664.1 845.5,668.9 845.8,660.1 846.1,661.6 846.4,662.1 846.7,667.1 847.0,663.3 847.3,671.1 847.6,660.8 847.9,662.0 848.2,662.1 848.5,673.7 848.8,658.4 849.1,663.3 849.4,663.7 849.7,666.3 850.0,658.0 850.3,666.8 850.6,667.0 850.9,668.2 851.2,657.8 851.5,657.4 851.8,663.7 852.1,666.4 852.4,672.5 852.7,662.8 853.0,655.2 853.3,662.0 853.6,667.4 853.9,662.0 854.2,665.7 854.5,658.6 854.8,667.5 855.1,663.6 855.4,660.9 855.7,668.4 856.0,660.4 856.3,665.6 856.6,665.6 856.9,671.2 857.2,650.4 857.5,660.5 857.8,666.6 858.1,658.0 858.4,670.1 858.7,660.3 859.0,664.6 859.3,667.4 859.6,668.8 859.9,669.7 860.2,663.5 860.5,666.4 860.8,661.9 861.1,671.9 861.4,666.6 861.7,662.9 862.0,661.5 862.3,667.3 862.6,672.7 862.9,667.4 863.2,666.7 863.5,660.5 863.8,669.5 864.1,666.4 864.4,659.9 864.7,661.4 865.0,664.1 865.3,655.6 865.6,662.8 865.9,666.7 866.2,666.3 866.5,659.3 866.8,662.5 867.1,679.4 867.4,675.8 867.7,662.7 868.0,665.9 868.3,664.2 868.6,659.1 868.9,663.6 869.2,655.3 869.5,666.6 869.8,663.8 870.1,661.9 870.4,668.7 870.7,673.0 871.0,663.8 871.3,669.7 871.6,665.2 871.9,665.7 872.2,666.8 872.5,661.7 872.8,672.3 873.1,668.8 873.4,664.8 873.7,660.7 874.0,666.1 874.3,664.9 874.6,663.3 874.9,665.2 875.2,667.3 875.5,672.0 875.8,666.9 876.1,669.4 876.4,672.4 876.7,668.9 877.0,674.0 877.3,666.6 877.6,671.3 877.9,665.1 878.2,663.0 878.5,670.4 878.8,659.0 879.1,669.5 879.4,674.6 879.7,681.5 880.0,663.2 880.3,666.4 880.6,675.7 880.9,657.7 881.2,664.2 881.5,674.8 881.8,669.6 882.1,667.1 882.4,666.0 882.7,670.8 883.0,672.0 883.3,671.2 883.6,666.4 883.9,663.0 884.2,666.5 884.5,665.5 884.8,667.1 885.1,661.9 885.4,666.9 885.7,671.4 886.0,667.7 886.3,664.0 886.6,667.2 886.9,663.8 887.2,664.3 887.5,666.1 887.8,668.7 888.1,682.6 888.4,666.1 888.7,666.3 889.0,668.1 889.3,662.8 889.6,655.9 889.9,673.7 890.2,660.6 890.5,665.3 890.8,678.2 891.1,669.5 891.4,669.4 891.7,666.1 892.0,663.7 892.3,666.9 892.6,666.4 892.9,665.4 893.2,663.3 893.5,668.5 893.8,667.4 894.1,676.4 894.4,669.8 894.7,664.6 895.0,668.1 895.3,666.0 895.6,667.4 895.9,666.2 896.2,669.4 896.5,670.2 896.8,669.0 897.1,661.2 897.4,676.0 897.7,673.9 898.0,669.2 898.3,661.0 898.6,674.6 898.9,665.8 899.2,658.5 899.5,658.3 899.8,656.3 900.1,662.7 900.4,672.3 900.7,671.9 901.0,665.2 901.3,661.4 901.6,664.6 901.9,663.0 902.2,667.6 902.5,664.3 902.8,664.7 903.1,666.6 903.4,657.2 903.7,663.6 904.0,671.8 904.3,667.6 904.6,669.8 904.9,668.0 905.2,666.5 905.5,665.1 905.8,664.8 906.1,657.7 906.4,663.2 906.7,660.7 907.0,667.2 907.3,664.5 907.6,656.3 907.9,655.7 908.2,680.4 908.5,657.8 908.8,665.4 909.1,659.9 909.4,665.8 909.7,661.0 910.0,653.9 910.3,667.4 910.6,672.6 910.9,671.6 911.2,659.9 911.5,666.2 911.8,664.7 912.1,660.6 912.4,667.4 912.7,667.8 913.0,664.1 913.3,660.6 913.6,666.0 913.9,668.6 914.2,674.0 914.5,660.3 914.8,670.9 915.1,666.7 915.4,668.4 915.7,651.1 916.0,653.8 916.3,656.2 916.6,669.2 916.9,664.3 917.2,661.2 917.5,665.9 917.8,663.9 918.1,663.5 918.4,664.6 918.7,670.6 919.0,665.8 919.3,662.1 919.6,661.8 919.9,656.8 920.2,664.3 920.5,662.7 920.8,664.1 921.1,646.7 921.4,670.1 921.7,668.5 922.0,668.1 922.3,669.8 922.6,675.4 922.9,664.8 923.2,663.3 923.5,662.9 923.8,670.6 924.1,671.9 924.4,665.8 924.7,664.0 925.0,665.5 925.3,665.9 925.6,672.9 925.9,663.9 926.2,659.6 926.5,657.4 926.8,672.2 927.1,659.4 927.4,663.5 927.7,655.0 928.0,671.8 928.3,664.2 928.6,667.0 928.9,658.5 929.2,670.8 929.5,663.3 929.8,667.5 930.1,672.5 930.4,659.8 930.7,662.9 931.0,670.9 931.3,665.1 931.6,666.1 931.9,660.1 932.2,671.6 932.5,670.6 932.8,658.0 933.1,659.8 933.4,665.1 933.7,666.2 934.0,657.6 934.3,662.9 934.6,655.7 934.9,660.9 935.2,671.9 935.5,671.5 935.8,663.7 936.1,675.3 936.4,673.1 936.7,668.6 937.0,663.8 937.3,659.4 937.6,664.6 937.9,671.1 938.2,670.1 938.5,666.7 938.8,665.6 939.1,672.5 939.4,665.8 939.7,668.6 940.0,664.1 940.3,667.2 940.6,661.9 940.9,667.1 941.2,665.1 941.5,662.4 941.8,668.1 942.1,656.3 942.4,669.1 942.7,672.5 943.0,660.3 943.3,663.5 943.6,670.5 943.9,670.6 944.2,666.0 944.5,671.3 944.8,663.0 945.1,661.3 945.4,656.1 945.7,663.3 946.0,663.2 946.3,661.7 946.6,666.4 946.9,673.2 947.2,665.9 947.5,669.0 947.8,671.0 948.1,672.1 948.4,673.2 948.7,667.4 949.0,676.3 949.3,660.4 949.6,668.9 949.9,666.7 950.2,656.3 950.5,665.0 950.8,667.8 951.1,666.2 951.4,665.6 951.7,668.0 952.0,665.5 952.3,658.4 952.6,669.6 952.9,672.8 953.2,663.7 953.5,662.8 953.8,663.6 954.1,670.3 954.4,670.5 954.7,666.0 955.0,666.5 955.3,674.6 955.6,670.7 955.9,671.5 956.2,663.6 956.5,664.7 956.8,669.9 957.1,670.0 957.4,670.8 957.7,670.7 958.0,664.7 958.3,661.2 958.6,681.0 958.9,663.1 959.2,660.5 959.5,662.4 959.8,663.7 960.1,673.7 960.4,667.7 960.7,676.6 961.0,661.1 961.3,673.2 961.6,662.2 961.9,668.0 962.2,665.7 962.5,662.2 962.8,666.5 963.1,669.0 963.4,664.0 963.7,661.6 964.0,668.9 964.3,669.2 964.6,664.7 964.9,664.3 965.2,672.7 965.5,664.8 965.8,654.8 966.1,663.0 966.4,674.2 966.7,668.7 967.0,667.1 967.3,664.2 967.6,669.3 967.9,666.8 968.2,670.5 968.5,661.0 968.8,667.6 969.1,667.5 969.4,660.7 969.7,665.5 970.0,668.5 970.3,665.3 970.6,665.9 970.9,665.9 971.2,663.8 971.5,665.2 971.8,670.0 972.1,665.1 972.4,668.4 972.7,664.4 973.0,672.4 973.3,664.0 973.6,668.2 973.9,665.8 974.2,670.5 974.5,665.8 974.8,662.2 975.1,660.7 975.4,663.6 975.7,671.1 976.0,656.0 976.3,664.2 976.6,662.9 976.9,669.1 977.2,659.5 977.5,669.3 977.8,674.9 978.1,659.8 978.4,665.8 978.7,658.0 979.0,663.6 979.3,662.3 979.6,668.5 979.9,664.7 980.2,668.2 980.5,673.2 980.8,667.9 981.1,669.5 981.4,661.9 981.7,658.4 982.0,666.1 982.3,666.6 982.6,661.4 982.9,664.7 983.2,666.3 983.5,666.4 983.8,669.0 984.1,669.7 984.4,659.9 984.7,663.0 985.0,660.8 985.3,659.5 985.6,663.8 985.9,664.3 986.2,661.8 986.5,658.9 986.8,666.4 987.1,663.6 987.4,670.7 987.7,668.5 988.0,663.1 988.3,663.6 988.6,666.8 988.9,669.8 989.2,666.5 989.5,664.1 989.8,658.3 990.1,665.4 990.4,666.9 990.7,665.7 991.0,674.1 991.3,656.1 991.6,666.0 991.9,668.9 992.2,664.6 992.5,665.7 992.8,675.7 993.1,666.2 993.4,667.8 993.7,670.4 994.0,667.3 994.3,665.4 994.6,658.8 994.9,661.1 995.2,659.8 995.5,662.3 995.8,671.0 996.1,666.3 996.4,670.8 996.7,657.2 997.0,658.1 997.3,673.6 997.6,664.6 997.9,665.7 998.2,670.0 998.5,670.7 998.8,672.6 999.1,666.1 999.4,666.8 999.7,676.9 1000.0,672.4 1000.3,671.7 1000.6,660.6 1000.9,667.7 1001.2,670.0 1001.5,659.4 1001.8,670.0 1002.1,660.2 1002.4,658.9 1002.7,658.3 1003.0,667.7 1003.3,672.2 1003.6,666.5 1003.9,672.5 1004.2,661.1 1004.5,667.2 1004.8,665.2 1005.1,656.9 1005.4,668.6 1005.7,666.3 1006.0,666.2 1006.3,660.8 1006.6,672.1 1006.9,667.6 1007.2,665.9 1007.5,664.3 1007.8,671.3 1008.1,668.9 1008.4,652.0 1008.7,662.8 1009.0,672.6 1009.3,673.2 1009.6,677.7 1009.9,664.6 1010.2,658.3 1010.5,664.9 1010.8,655.6 1011.1,675.8 1011.4,667.4 1011.7,666.1 1012.0,666.1 1012.3,666.7 1012.6,678.2 1012.9,654.4 1013.2,661.2 1013.5,670.1 1013.8,669.8 1014.1,671.6 1014.4,653.7 1014.7,668.2 1015.0,668.2 1015.3,652.9 1015.6,661.2 1015.9,663.6 1016.2,670.8 1016.5,663.3 1016.8,662.6 1017.1,667.3 1017.4,665.7 1017.7,666.3 1018.0,659.8 1018.3,670.9 1018.6,660.1 1018.9,673.1 1019.2,661.1 1019.5,662.2 1019.8,664.7 1020.1,663.2 1020.4,671.1 1020.7,662.8 1021.0,664.6"/>
<polyline fill="none" stroke="#c8504e" stroke-width="1" shape-rendering="crispEdges" points="1172.0,649.7 1172.3,659.1 1172.6,644.8 1172.9,648.6 1173.2,658.4 1173.5,653.9 1173.8,652.5 1174.1,652.3 1174.4,658.6 1174.7,657.6 1175.0,653.5 1175.3,650.5 1175.6,667.7 1175.9,646.0 1176.2,646.6 1176.5,654.3 1176.8,649.2 1177.1,657.2 1177.4,652.0 1177.7,648.3 1178.0,646.7"/>
<polyline fill="none" stroke="#c8504e" stroke-width="1" shape-rendering="crispEdges" points="1215.0,661.6 1215.3,656.1 1215.6,648.9 1215.9,654.4 1216.2,648.9 1216.5,654.9 1216.8,673.6 1217.1,661.9 1217.4,654.9 1217.7,653.7 1218.0,647.6 1218.3,649.8 1218.6,666.9 1218.9,658.2 1219.2,640.5 1219.5,660.1 1219.8,657.2 1220.1,653.4 1220.4,654.2 1220.7,649.2 1221.0,657.5 1221.3,656.8 1221.6,646.9 1221.9,652.4 1222.2,662.7 1222.5,650.5 1222.8,674.8 1223.1,655.7 1223.4,656.6 1223.7,655.4 1224.0,655.3 1224.3,657.4 1224.6,650.5 1224.9,657.1 1225.2,658.7 1225.5,660.5 1225.8,655.4 1226.1,657.3 1226.4,658.7 1226.7,655.5 1227.0,667.5 1227.3,664.3 1227.6,658.4 1227.9,661.7 1228.2,662.9 1228.5,654.8 1228.8,668.9 1229.1,650.6 1229.4,658.3 1229.7,653.7 1230.0,654.6 1230.3,670.2 1230.6,652.4 1230.9,656.5 1231.2,658.7 1231.5,653.0 1231.8,660.9 1232.1,659.2 1232.4,655.9 1232.7,658.5 1233.0,651.7 1233.3,661.9 1233.6,657.8 1233.9,659.9 1234.2,660.8 1234.5,662.9 1234.8,662.0 1235.1,661.8 1235.4,654.6 1235.7,660.3 1236.0,653.6 1236.3,653.9 1236.6,659.7 1236.9,652.8 1237.2,656.9 1237.5,656.9 1237.8,653.5 1238.1,654.9 1238.4,665.3 1238.7,656.3 1239.0,650.6 1239.3,663.6 1239.6,662.9 1239.9,657.7 1240.2,652.4 1240.5,653.7 1240.8,658.5 1241.1,664.9 1241.4,661.1 1241.7,661.5 1242.0,646.8 1242.3,658.1 1242.6,667.1 1242.9,655.4 1243.2,650.0 1243.5,661.0 1243.8,663.7 1244.1,652.1 1244.4,655.8 1244.7,664.7 1245.0,658.3 1245.3,664.9 1245.6,656.1 1245.9,676.1 1246.2,658.4 1246.5,667.0 1246.8,653.8 1247.1,663.0 1247.4,654.4 1247.7,660.0 1248.0,653.2 1248.3,662.7 1248.6,649.8 1248.9,661.8 1249.2,657.3 1249.5,659.6 1249.8,663.2 1250.1,649.0 1250.4,656.8 1250.7,653.6 1251.0,646.7 1251.3,663.1 1251.6,659.5 1251.9,654.4 1252.2,666.3 1252.5,650.4 1252.8,660.3 1253.1,658.8 1253.4,664.2 1253.7,654.3 1254.0,652.3 1254.3,659.9 1254.6,653.4 1254.9,658.6 1255.2,656.2 1255.5,654.3 1255.8,661.2 1256.1,658.8 1256.4,651.4 1256.7,673.8 1257.0,656.1 1257.3,654.9 1257.6,657.4 1257.9,655.5 1258.2,669.4 1258.5,644.1 1258.8,658.8 1259.1,670.5 1259.4,665.8 1259.7,662.1 1260.0,663.1 1260.3,660.4 1260.6,651.8 1260.9,659.2 1261.2,654.0 1261.5,651.4 1261.8,656.0 1262.1,653.4 1262.4,655.7 1262.7,656.9 1263.0,669.8 1263.3,677.0 1263.6,642.1 1263.9,666.5 1264.2,667.3 1264.5,664.4 1264.8,648.9 1265.1,671.0 1265.4,668.3 1265.7,659.7 1266.0,654.5 1266.3,664.2 1266.6,649.7 1266.9,660.1 1267.2,656.9 1267.5,655.9 1267.8,661.2 1268.1,665.8 1268.4,678.0 1268.7,654.9 1269.0,665.4 1269.3,656.8 1269.6,661.1 1269.9,659.7 1270.2,658.5 1270.5,658.4 1270.8,667.0 1271.1,663.3 1271.4,663.9 1271.7,658.6 1272.0,665.5 1272.3,663.8 1272.6,656.4 1272.9,668.1 1273.2,666.7 1273.5,665.2 1273.8,667.4 1274.1,658.3 1274.4,663.1 1274.7,664.3 1275.0,662.1 1275.3,663.6 1275.6,653.7 1275.9,661.6 1276.2,662.1 1276.5,654.0 1276.8,671.4 1277.1,663.2 1277.4,665.1 1277.7,667.0 1278.0,659.9 1278.3,668.4 1278.6,668.7 1278.9,660.8 1279.2,658.5 1279.5,662.3 1279.8,664.1 1280.1,657.8 1280.4,648.9 1280.7,655.4 1281.0,666.4 1281.3,672.0 1281.6,659.8 1281.9,671.1 1282.2,666.3 1282.5,662.9 1282.8,657.5 1283.1,667.4 1283.4,670.3 1283.7,663.3 1284.0,672.1 1284.3,671.4 1284.6,668.5 1284.9,659.5 1285.2,663.1 1285.5,659.4 1285.8,667.3 1286.1,667.2 1286.4,666.9 1286.7,658.7 1287.0,666.3 1287.3,668.4 1287.6,674.2 1287.9,666.2 1288.2,667.9 1288.5,663.4 1288.8,670.9 1289.1,661.4 1289.4,670.9 1289.7,663.8 1290.0,668.6 1290.3,655.0 1290.6,659.2 1290.9,658.3 1291.2,664.8 1291.5,665.2 1291.8,670.1 1292.1,671.3 1292.4,668.2 1292.7,666.8 1293.0,676.4 1293.3,658.7 1293.6,654.2 1293.9,666.0 1294.2,665.0 1294.5,664.1 1294.8,662.1 1295.1,661.5 1295.4,665.4 1295.7,655.4 1296.0,654.7 1296.3,657.6 1296.6,665.5 1296.9,667.9 1297.2,670.8 1297.5,670.7 1297.8,667.0 1298.1,668.0 1298.4,655.2 1298.7,662.9 1299.0,661.4 1299.3,657.3 1299.6,659.7 1299.9,656.0 1300.2,666.1 1300.5,661.3 1300.8,669.1 1301.1,659.3 1301.4,664.3 1301.7,662.8 1302.0,660.7 1302.3,672.1 1302.6,670.8 1302.9,664.1 1303.2,666.3 1303.5,665.4 1303.8,681.7 1304.1,660.5 1304.4,669.3 1304.7,656.8 1305.0,662.7 1305.3,660.2 1305.6,664.7 1305.9,661.5 1306.2,666.1 1306.5,668.9 1306.8,656.9 1307.1,664.8 1307.4,666.4 1307.7,666.4 1308.0,655.4 1308.3,659.2 1308.6,668.0 1308.9,670.1 1309.2,665.8 1309.5,666.7 1309.8,671.3 1310.1,672.2 1310.4,665.3 1310.7,667.1 1311.0,659.3 1311.3,666.0 1311.6,664.5 1311.9,660.3 1312.2,664.3 1312.5,668.2 1312.8,661.2 1313.1,656.7 1313.4,671.0 1313.7,662.6 1314.0,658.4 1314.3,668.3 1314.6,663.5 1314.9,667.3 1315.2,657.4 1315.5,675.9 1315.8,670.7 1316.1,665.2 1316.4,661.1 1316.7,664.9 1317.0,666.6 1317.3,665.5 1317.6,664.1 1317.9,667.5 1318.2,656.7 1318.5,673.1 1318.8,672.7 1319.1,662.8 1319.4,667.5 1319.7,664.5 1320.0,673.5 1320.3,671.6 1320.6,658.9 1320.9,654.9 1321.2,664.6 1321.5,668.1 1321.8,665.7 1322.1,662.0 1322.4,625.4 1322.9,625.4 1322.7,662.0 1323.0,663.9 1323.3,660.2 1323.6,671.8 1323.9,666.1 1324.2,648.6 1324.5,667.3 1324.8,665.8 1325.1,667.7 1325.4,653.5 1325.7,678.5 1326.0,670.3 1326.3,665.4 1326.6,671.0 1326.9,661.6 1327.2,669.5 1327.5,669.6 1327.8,670.0 1328.1,661.7 1328.4,670.4 1328.7,661.8 1329.0,661.9 1329.3,672.7 1329.6,657.3 1329.9,672.0 1330.2,662.0 1330.5,671.6 1330.8,681.3 1331.1,675.6 1331.4,670.8 1331.7,664.6 1332.0,660.3 1332.3,671.3 1332.6,668.6 1332.9,674.8 1333.2,670.9 1333.5,673.8 1333.8,678.6 1334.1,660.7 1334.4,674.8 1334.7,665.5 1335.0,657.7 1335.3,676.4 1335.6,663.1 1335.9,663.5 1336.2,662.1 1336.5,686.5 1336.8,671.1 1337.1,670.3 1337.4,664.1 1337.7,669.7 1338.0,668.0 1338.3,670.9 1338.6,676.9 1338.9,677.0 1339.2,672.6 1339.5,667.5 1339.8,671.9 1340.1,672.6 1340.4,671.6 1340.7,671.1 1341.0,671.5 1341.3,667.4 1341.6,664.3 1341.9,675.5 1342.2,674.3 1342.5,661.9 1342.8,665.0 1343.1,669.4 1343.4,672.4 1343.7,664.6 1344.0,670.6 1344.3,665.5 1344.6,669.5 1344.9,677.7 1345.2,665.9 1345.5,666.5 1345.8,669.9 1346.1,673.6 1346.4,666.3 1346.7,668.2 1347.0,672.7 1347.3,669.4 1347.6,662.8 1347.9,662.6 1348.2,668.8 1348.5,672.3 1348.8,677.2 1349.1,671.0 1349.4,659.0 1349.7,664.1 1350.0,657.5 1350.3,672.1 1350.6,674.0 1350.9,671.4 1351.2,677.5 1351.5,676.0 1351.8,664.5 1352.1,677.9 1352.4,671.8 1352.7,676.1 1353.0,660.2 1353.3,676.5 1353.6,670.0 1353.9,667.8 1354.2,674.8 1354.5,678.8 1354.8,661.8 1355.1,667.7 1355.4,670.0 1355.7,665.1 1356.0,672.2 1356.3,659.0 1356.6,668.6 1356.9,676.2 1357.2,667.3 1357.5,687.6 1357.8,669.1 1358.1,673.1 1358.4,676.9 1358.7,667.3 1359.0,672.6 1359.3,668.0 1359.6,680.8 1359.9,665.6 1360.2,662.9 1360.5,660.0 1360.8,675.1 1361.1,670.0 1361.4,674.5 1361.7,666.5 1362.0,673.9 1362.3,666.9 1362.6,679.4 1362.9,673.9 1363.2,670.0 1363.5,653.1 1363.8,667.8 1364.1,665.2 1364.4,665.5 1364.7,666.3 1365.0,662.3 1365.3,672.6 1365.6,669.9 1365.9,665.4 1366.2,672.4 1366.5,663.3 1366.8,675.9 1367.1,673.4 1367.4,675.8 1367.7,672.4 1368.0,675.6 1368.3,675.7 1368.6,684.6 1368.9,673.9 1369.2,667.2 1369.5,674.2 1369.8,666.5 1370.1,669.5 1370.4,670.1 1370.7,670.4 1371.0,662.6 1371.3,669.3 1371.6,667.6 1371.9,668.8 1372.2,671.2 1372.5,674.5 1372.8,675.9 1373.1,661.3 1373.4,670.4 1373.7,685.4 1374.0,680.3 1374.3,670.8 1374.6,676.0 1374.9,678.2 1375.2,672.0 1375.5,675.5 1375.8,675.8 1376.1,672.0 1376.4,658.9 1376.7,677.2 1377.0,671.9 1377.3,665.0 1377.6,674.1 1377.9,669.6 1378.2,675.0 1378.5,679.0 1378.8,669.5 1379.1,670.4 1379.4,672.7 1379.7,670.4 1380.0,674.2 1380.3,667.6 1380.6,668.7 1380.9,674.1 1381.2,671.3 1381.5,674.1 1381.8,677.8 1382.1,672.0 1382.4,675.4 1382.7,676.3 1383.0,672.9 1383.3,673.2 1383.6,671.8 1383.9,669.4 1384.2,671.5 1384.5,674.6 1384.8,665.4 1385.1,675.8 1385.4,671.0 1385.7,678.6 1386.0,672.0 1386.3,667.5 1386.6,674.4 1386.9,672.6"/>
<polyline fill="none" stroke="#0000ff" stroke-width="1.2" points="734.0,719.2 736.0,717.5 737.0,719.2 742.0,718.0 743.0,719.2 750.0,718.0 751.0,719.2 917.0,719.2 919.0,719.0 919.8,700.0 920.7,640.0 921.6,595.0 922.4,560.0 923.3,511.0 924.2,640.0 924.6,700.0 925.3,660.0 926.4,622.0 927.0,690.0 928.0,705.0 929.0,716.0 930.5,719.0 931.6,719.0 932.3,590.0 933.5,519.0 934.6,460.0 935.5,330.0 936.4,307.0 937.0,360.0 937.8,490.0 938.4,557.0 938.7,719.2 1391.0,719.2"/>
<polyline fill="none" stroke="#0000ff" stroke-width="1.2" points="920.0,719.0 921.0,690.0 922.0,610.0 922.8,580.0 923.6,640.0 924.0,719.0 925.0,690.0 926.0,719.0"/>
<g stroke="#000" stroke-width="1" fill="none" shape-rendering="crispEdges">
<path d="M725.5 255V725M1396.5 255V725M734 728.5H1387"/>
</g>
<g stroke="#000" stroke-width="1" fill="none" shape-rendering="crispEdges">
<path d="M717.3 719.2H725.3M721.3 700.8H725.3M721.3 682.4H725.3M721.3 664.0H725.3M721.3 645.6H725.3M717.3 627.3H725.3M721.3 608.9H725.3M721.3 590.5H725.3M721.3 572.1H725.3M721.3 553.7H725.3M717.3 535.3H725.3M721.3 516.9H725.3M721.3 498.5H725.3M721.3 480.2H725.3M721.3 461.8H725.3M717.3 443.4H725.3M721.3 425.0H725.3M721.3 406.6H725.3M721.3 388.2H725.3M721.3 369.8H725.3M717.3 351.4H725.3M721.3 333.1H725.3M721.3 314.7H725.3M721.3 296.3H725.3M721.3 277.9H725.3M717.3 259.5H725.3M1396 719.2H1404.0M1396 700.0H1400.0M1396 680.9H1400.0M1396 661.7H1400.0M1396 642.6H1404.0M1396 623.4H1400.0M1396 604.3H1400.0M1396 585.1H1400.0M1396 566.0H1404.0M1396 546.8H1400.0M1396 527.7H1400.0M1396 508.5H1400.0M1396 489.4H1404.0M1396 470.2H1400.0M1396 451.0H1400.0M1396 431.9H1400.0M1396 412.7H1404.0M1396 393.6H1400.0M1396 374.4H1400.0M1396 355.3H1400.0M1396 336.1H1404.0M1396 317.0H1400.0M1396 297.8H1400.0M1396 278.7H1400.0M1396 259.5H1404.0M772.2 728.5V736M837.5 728.5V736M903.0 728.5V736M968.5 728.5V736M1034.0 728.5V736M1099.3 728.5V736M1164.5 728.5V736M1229.5 728.5V736M1294.5 728.5V736M1360.2 728.5V736"/>
</g>
<g font-size="13.5" fill="#000" text-anchor="end">
<text x="711.5" y="264.5">5</text><text x="711.5" y="356.4">4</text><text x="711.5" y="448.3">3</text><text x="711.5" y="540.2">2</text><text x="711.5" y="632.1">1</text><text x="711.5" y="724">0</text>
</g>
<g font-size="13.5" fill="#000">
<text x="1409" y="264">0.12</text><text x="1409" y="340.6">0.1</text><text x="1409" y="417.3">0.08</text><text x="1409" y="494">0.06</text><text x="1409" y="570.6">0.04</text><text x="1409" y="647.3">0.02</text><text x="1409" y="724">0</text>
</g>
<g font-size="12.6" fill="#000" text-anchor="middle">
<text x="772.2" y="751">12:21</text><text x="837.5" y="751">12:24</text><text x="903" y="751">12:27</text><text x="968.5" y="751">12:30</text><text x="1034" y="751">12:33</text><text x="1099.3" y="751">12:36</text><text x="1164.5" y="751">12:39</text><text x="1229.5" y="751">12:42</text><text x="1294.5" y="751">12:45</text><text x="1360.2" y="751">12:48</text>
</g>
<text x="1070.5" y="244" font-size="13.6" font-weight="bold" text-anchor="middle" fill="#000">2019-Aug-17 12:19:14 - 12:49:14</text>
<text x="1060" y="771" font-size="15" font-weight="bold" text-anchor="middle" fill="#000">Time</text>
<text transform="translate(697,488) rotate(-90)" font-size="15" font-weight="bold" text-anchor="middle" fill="#000">RICE</text>
<text transform="translate(1443,488) rotate(90)" font-size="15" font-weight="bold" text-anchor="middle" fill="#000">PLWCD_LWOI</text>
<rect x="950" y="787" width="9" height="9" fill="#c8504e"/><text x="964" y="796" font-size="13.6" fill="#000">RICE (V)</text>
<rect x="1023" y="787" width="9" height="9" fill="#0000ff"/><text x="1037" y="796" font-size="13.6" fill="#000">PLWCD_LWOI (g m-3)</text>

</svg>
</div>


<!-- ===== TASKBAR ===== -->
<div id="tb" class="a">
  <div class="tbb" style="left:2px;width:261px"><span style="left:34px">dsm_server</span></div>
  <div class="tbb" style="left:267px;width:262px"><span style="left:34px">NIMBUS</span></div>
  <div class="tbb" style="left:533px;width:262px"><span style="left:34px;letter-spacing:-0.4px">XChat: Kyle-ADS @ RDCC / #daq-gv...</span></div>
  <div class="tbb" style="left:799px;width:260px"><span style="left:34px">Controls - Mozilla Firefox</span></div>
  <div class="tbb" style="left:1064px;width:260px"><span style="left:34px">TechProjNotes (/home/local/project...</span></div>
  <div class="tbb act" style="left:1329px;width:261px"><span style="left:34px">AEROS V1.0-213M</span></div>
  <div class="tbb" style="left:1630px;width:48px;top:5px;height:28px;border-color:#d0d0ce;background:#e6e6e5"><span style="left:9px;top:2px;font-size:15px">1 / 6</span></div>
  <svg class="a" style="left:0;top:0" width="1400" height="35">
    <!-- dsm gear -->
    <g transform="translate(20,19)">
      <circle r="9" fill="#d8d8d8" stroke="#888" stroke-width="0.8" stroke-dasharray="1.5 1"/>
      <path d="M-2 -11H2V-8H-2ZM-2 8H2V11H-2ZM-11 -2V2H-8V-2ZM8 -2V2H11V-2Z" fill="#d0d0d0"/>
      <circle r="6" fill="#2a5aa8"/><circle r="4.2" fill="#eef"/><path d="M-1.5 -2.5L2.8 0L-1.5 2.5Z" fill="#2a5aa8"/>
    </g>
    <!-- nimbus terminal -->
    <rect x="274" y="8" width="22" height="20" rx="1.5" fill="#c4c4c2" stroke="#777" stroke-width="0.8"/>
    <rect x="276" y="10" width="18" height="16" fill="#2b312f"/>
    <path d="M278 12L280 13.5L278 15M281 16H284" stroke="#fff" stroke-width="0.9" fill="none"/>
    <!-- xchat -->
    <g transform="translate(551,19) scale(0.5) translate(-182.5,-521.5)">
      <path d="M170.5 500L182.5 512L194.5 500L204 509.5L193 521.5L204 533.5L194.5 543L182.5 531L170.5 543L161 533.5L172 521.5L161 509.5Z" fill="url(#gxt)" stroke="#e06a00" stroke-width="1"/>
      <rect x="165" y="516" width="33.5" height="11" rx="5" fill="#eef2f7" stroke="#6a7078" stroke-width="1"/>
    </g>
    <!-- firefox -->
    <g transform="translate(817,19) scale(0.5) translate(-183,-447)">
      <circle cx="183" cy="448" r="21" fill="url(#gffo)"/>
      <circle cx="185" cy="442.6" r="13.5" fill="url(#gffb)"/>
      <path d="M166.5 430L171 436.5Q176 433 180.5 432.5L178 437.5Q182.5 439 182.5 442.5L177.5 444.5Q175 448 176.5 451Q181 454.5 187 451.5Q184 457.5 176 457.5Q167 453 166.5 444Z" fill="url(#gffh)"/>
      <path d="M190.5 424Q205 436 205 451Q204 463 194 467Q201 456 197.5 446Q194.5 437 187 433.5Z" fill="#ffd53a"/>
    </g>
    <!-- notes -->
    <rect x="1073" y="9" width="18" height="21" fill="#fafafa" stroke="#666" stroke-width="1"/>
    <path d="M1074 8V11M1077 8V11M1080 8V11M1083 8V11M1086 8V11M1089 8V11" stroke="#555" stroke-width="1"/>
    <path d="M1075 15H1088M1075 18H1088M1075 21H1086M1075 24H1084" stroke="#aaa" stroke-width="0.8"/>
    <path d="M1084 27L1094 13L1097 15L1087 29Z" fill="#f39c12" stroke="#a0520a" stroke-width="0.7"/>
    <!-- aeros doc -->
    <path d="M1337 11H1357V26L1353 30H1337Z" fill="#fff" stroke="#d0d0ce" stroke-width="0.6"/>
  </svg>
</div>

<!-- ===== TOP BAR ===== -->
<div id="top" class="a">
  <div class="t" style="left:31px;top:6px;font-size:14.3px">Applications</div>
  <div class="t" style="left:129px;top:6px;font-size:14.3px">Places</div>
  <div class="t" style="left:195px;top:6px;font-size:14.3px">AEROS V1.0-213M</div>
  <div class="t" style="left:1422px;top:6px;font-size:14.5px">Sat Aug 17, 12:49:16</div>
  <svg class="a" style="left:0;top:0" width="30" height="27">
    <rect x="10.5" y="8.5" width="4.4" height="4.4" fill="#8fd12a"/>
    <rect x="16" y="8.5" width="4.4" height="4.4" fill="#9c2a8c"/>
    <rect x="10.5" y="14" width="4.4" height="4.4" fill="#26288a"/>
    <rect x="16" y="14" width="4.4" height="4.4" fill="#f7a11a"/>
    <path d="M15.4 6.5V12.9" stroke="#f7a11a" stroke-width="1.2"/><path d="M15.4 13.9V20" stroke="#8fd12a" stroke-width="1.2"/>
    <path d="M9 13.4H14.9" stroke="#9c2a8c" stroke-width="1.2"/><path d="M15.9 13.4H22" stroke="#26288a" stroke-width="1.2"/>
  </svg>
  <svg class="a" style="left:1555px;top:0" width="125" height="27">
    <circle cx="9" cy="13" r="4" fill="#2e3436"/>
    <rect x="43" y="6" width="5" height="4.5" fill="#2e3436"/>
    <rect x="38" y="16.2" width="5" height="4.8" fill="#2e3436"/>
    <rect x="48" y="16.2" width="5" height="4.8" fill="#2e3436"/>
    <path d="M45.5 10V13.5H40.5V16.5M45.5 13.5H50.5V16.5" fill="none" stroke="#2e3436" stroke-width="1.2"/>
    <path d="M66 10H69L72.5 7V19L69 16H66Z" fill="#2e3436"/>
    <path d="M75 10.5Q76.3 13 75 15.5M77.5 8.5Q79.8 13 77.5 17.5M80 6.5Q83.2 13 80 19.5" fill="none" stroke="#2e3436" stroke-width="1.4"/>
    <path d="M98.5 8.3A6.3 6.3 0 1 0 105.5 8.3" fill="none" stroke="#2e3436" stroke-width="1.6"/>
    <path d="M102 5V11.5" stroke="#2e3436" stroke-width="1.7"/>
  </svg>
</div>
</body></html>
